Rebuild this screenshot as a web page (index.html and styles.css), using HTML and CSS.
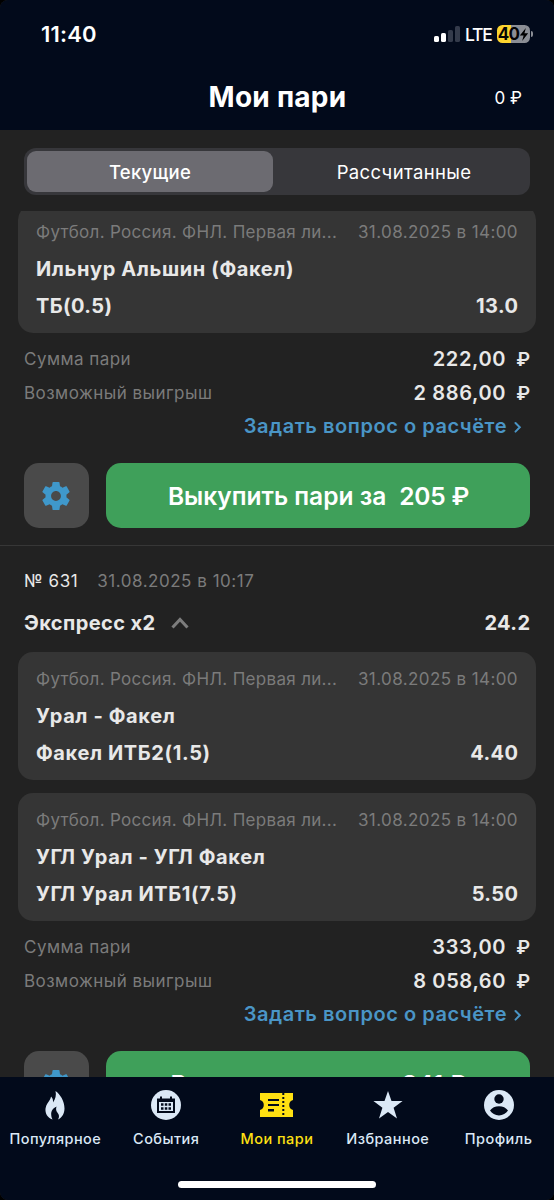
FILE: index.html
```html
<!DOCTYPE html>
<html lang="ru">
<head>
<meta charset="utf-8">
<title>Мои пари</title>
<link rel="stylesheet" href="styles.css">
</head>
<body>
<svg class="defs" width="0" height="0" aria-hidden="true">
  <symbol id="gear" viewBox="2 2 20 20"><path d="M19.43 12.98c.04-.32.07-.64.07-.98s-.03-.66-.07-.98l2.11-1.65c.19-.15.24-.42.12-.64l-2-3.46c-.12-.22-.39-.3-.61-.22l-2.49 1c-.52-.4-1.08-.73-1.69-.98l-.38-2.65C14.46 2.18 14.25 2 14 2h-4c-.25 0-.46.18-.49.42l-.38 2.65c-.61.25-1.17.59-1.69.98l-2.49-1c-.23-.09-.49 0-.61.22l-2 3.46c-.13.22-.07.49.12.64l2.11 1.65c-.04.32-.07.65-.07.98s.03.66.07.98l-2.11 1.65c-.19.15-.24.42-.12.64l2 3.46c.12.22.39.3.61.22l2.49-1c.52.4 1.08.73 1.69.98l.38 2.65c.03.24.24.42.49.42h4c.25 0 .46-.18.49-.42l.38-2.65c.61-.25 1.17-.59 1.69-.98l2.49 1c.23.09.49 0 .61-.22l2-3.46c.12-.22.07-.49-.12-.64l-2.11-1.65zM12 15.5c-1.93 0-3.500-1.57-3.500-3.5s1.57-3.5 3.500-3.5 3.500 1.57 3.500 3.5-1.57 3.5-3.500 3.5z"/></symbol>
</svg>
<div class="app">
  <header class="header">
    <div class="status">
      <span class="time">11:40</span>
      <span class="status-right">
        <svg class="signal" viewBox="0 0 26 16" width="26" height="16"><rect x="0" y="10" width="5" height="6" rx="1.6" fill="#fff"/><rect x="7" y="7" width="5" height="9" rx="1.6" fill="#fff"/><rect x="14" y="4" width="5" height="12" rx="1.6" fill="#343b4b"/><rect x="21" y="0" width="5" height="16" rx="1.6" fill="#343b4b"/></svg>
        <span class="lte">LTE</span>
        <span class="battery"><span class="battery-text">40</span><svg class="bolt" viewBox="0 0 10 14" width="10" height="13"><path d="M7 0 .5 8H4.600L3 14 9.500 5.700H5.500z"/></svg></span>
        <span class="battery-tip"></span>
      </span>
    </div>
    <div class="titlebar">
      <h1 class="title">Мои пари</h1>
      <span class="balance">0 ₽</span>
    </div>
  </header>

  <div class="tabs">
    <span class="tab tab-active">Текущие</span>
    <span class="tab">Рассчитанные</span>
  </div>

  <main class="list">
    <section class="bet">
      <div class="card">
        <div class="row meta"><span class="league">Футбол. Россия. ФНЛ. Первая ли...</span><span class="when">31.08.2025 в 14:00</span></div>
        <div class="row strong"><span>Ильнур Альшин (Факел)</span></div>
        <div class="row strong"><span class="tight">ТБ(0.5)</span><span class="odds">13.0</span></div>
      </div>
      <div class="totals">
        <div class="row"><span class="label">Сумма пари</span><span class="amount">222,00<i>₽</i></span></div>
        <div class="row"><span class="label">Возможный выигрыш</span><span class="amount">2 886,00<i>₽</i></span></div>
        <div class="row ask"><span>Задать вопрос о расчёте</span><svg viewBox="0 0 8 12" width="8" height="12"><path d="m1.500 2 4.300 4.300-4.300 4.300"/></svg></div>
      </div>
      <div class="actions">
        <span class="settings"><svg class="gear" width="28" height="28"><use href="#gear"/></svg></span>
        <span class="cashout"><span>Выкупить пари за</span><span class="sum">205 ₽</span></span>
      </div>
    </section>

    <section class="bet bet-next">
      <div class="row number"><span class="id">№ 631</span><span class="placed">31.08.2025 в 10:17</span></div>
      <div class="row strong express"><span class="tight">Экспресс x2</span><svg viewBox="0 0 18 12" width="18" height="12"><path d="m1.500 10.500 7.500-8 7.500 8"/></svg><span class="odds total">24.2</span></div>
      <div class="card">
        <div class="row meta"><span class="league">Футбол. Россия. ФНЛ. Первая ли...</span><span class="when">31.08.2025 в 14:00</span></div>
        <div class="row strong"><span>Урал - Факел</span></div>
        <div class="row strong"><span>Факел ИТБ2(1.5)</span><span class="odds">4.40</span></div>
      </div>
      <div class="card">
        <div class="row meta"><span class="league">Футбол. Россия. ФНЛ. Первая ли...</span><span class="when">31.08.2025 в 14:00</span></div>
        <div class="row strong"><span>УГЛ Урал - УГЛ Факел</span></div>
        <div class="row strong"><span>УГЛ Урал ИТБ1(7.5)</span><span class="odds">5.50</span></div>
      </div>
      <div class="totals">
        <div class="row"><span class="label">Сумма пари</span><span class="amount">333,00<i>₽</i></span></div>
        <div class="row"><span class="label">Возможный выигрыш</span><span class="amount">8 058,60<i>₽</i></span></div>
        <div class="row ask"><span>Задать вопрос о расчёте</span><svg viewBox="0 0 8 12" width="8" height="12"><path d="m1.500 2 4.300 4.300-4.300 4.300"/></svg></div>
      </div>
      <div class="actions">
        <span class="settings"><svg class="gear" width="28" height="28"><use href="#gear"/></svg></span>
        <span class="cashout"><span>Выкупить пари за</span><span class="sum">841 ₽</span></span>
      </div>
    </section>
  </main>

  <nav class="nav">
    <div class="items">
      <a class="item"><svg viewBox="0 0 20 30" width="20" height="30"><path d="M7.500 29.500C2.500 27.500 0 23.500.5 18.500 1 14.500 3.500 12 5 9.500c.6-1 .8-2 1-3 1.600 1.400 2.300 3.500 2 6C10.500 9 11.500 5 10.500 1c4.500 3 9 10 9 17.500 0 5-2.500 9-6.500 11 1.500-2.500 1.300-4.800-.3-6.500-1.700-1.800-2-4-1.200-6.500-3.500 1.500-5.500 4.500-5.300 8 .1 2 .5 3.500 1.300 5z"/></svg><span>Популярное</span></a>
      <a class="item"><svg viewBox="0 0 30 30" width="30" height="30"><circle cx="15" cy="15" r="15"/><path class="cut" d="M6 8.500h3V6.500h2v2h8v-2h2v2h3V23H6z"/><path d="M8 12h14v9H8z"/><path class="cut" d="M10 13.200h2.500v2.500H10zm3.800 0h2.500v2.500h-2.500zm3.700 0H20v2.500h-2.500zM10 17.300h2.500v2.500H10zm3.800 0h2.500v2.500h-2.500zm3.700 0H20v2.500h-2.500z"/></svg><span>События</span></a>
      <a class="item current"><svg viewBox="0 0 33 24" width="33" height="24"><path d="M0 0h33v7a5.200 5.200 0 0 0 0 10v7H0v-7a5.200 5.200 0 0 0 0-10z"/><path class="cut" d="M8 6h11v2H8zm0 5h11v2H8zm0 5h6v2.500H8z"/><path class="perf" d="M23.300 0v24"/></svg><span>Мои пари</span></a>
      <a class="item"><svg viewBox="0 0 30 30" width="30" height="30"><path d="m15 1 3.500 10H29.600l-9 6.700L24 28.500l-9-6.500-9 6.500 3.400-10.800L.4 11h11.100z"/></svg><span>Избранное</span></a>
      <a class="item"><svg viewBox="0 0 30 30" width="30" height="30"><circle cx="15" cy="15" r="15"/><circle class="cut" cx="15" cy="9" r="4.700"/><path class="cut" d="M6 20.600c2-2.800 5.200-4.300 9-4.300s7 1.500 9 4.300c-2 3.100-5.200 4.900-9 4.900s-7-1.800-9-4.900z"/></svg><span>Профиль</span></a>
    </div>
    <div class="home"></div>
  </nav>
</div>
</body>
</html>
```

FILE: styles.css
```css
* { box-sizing: border-box; }
body { margin: 0; background: #000; font-family: Inter, "Noto Sans", sans-serif; }
.defs { display: block; }
.app { width: 554px; height: 1200px; display: flex; flex-direction: column; background: #222; border-radius: 8px; overflow: hidden; color: #e8e8e8; white-space: nowrap; }

.header { flex: none; height: 130px; background: #020a1b; color: #fff; }
.status { height: 68px; padding: 0 21px 0 41px; display: flex; align-items: center; justify-content: space-between; }
.time { font-size: 22px; font-weight: 600; letter-spacing: 0.2px; }
.status-right { display: flex; align-items: center; }
.lte { margin-left: 5px; width: 32px; font-size: 17.5px; font-weight: 500; letter-spacing: -1.2px; }
.battery { width: 33px; height: 18px; border-radius: 5.500px; background: linear-gradient(90deg, #fdd52e 14px, #8b8e95 14px); color: #050505; display: flex; align-items: center; justify-content: center; }
.battery-text { font-size: 17px; font-weight: 700; letter-spacing: -0.7px; }
.battery-tip { width: 2px; height: 6px; margin-left: 1px; border-radius: 0 2px 2px 0; background: #8b8e95; }
.titlebar { height: 58px; display: grid; grid-template-columns: 1fr auto 1fr; align-items: center; }
.title { grid-column: 2; margin: 0; padding-left: 1px; font-size: 28px; font-weight: 700; letter-spacing: 0.25px; }
.balance { justify-self: end; margin-right: 32px; padding-top: 1px; font-size: 17px; }

.tabs { flex: none; height: 47px; margin: 18px 24px 16px; padding: 3px; border-radius: 12px; background: #37373b; display: flex; color: #fff; }
.tab { flex: 1 1 0; display: flex; align-items: center; justify-content: center; padding-left: 8px; border-radius: 9px; font-size: 18.5px; letter-spacing: 0.35px; }
.tab-active { flex: 0 0 246px; padding-left: 0; background: #6c6b71; font-weight: 500; letter-spacing: 0.25px; }

.list { flex: none; height: 866px; overflow: hidden; }
.bet { padding-bottom: 17px; }
.list > .bet:first-child { margin-top: -6.500px; }
.row { display: flex; align-items: center; justify-content: space-between; }
.card { height: 128px; margin: 0 18px 12.500px; padding: 8.500px 18px 8px; border-radius: 15px; background: #353535; }
.card .row { height: 37px; }
.meta { font-size: 17px; color: #7b7b7b; letter-spacing: 0.31px; }
.when { letter-spacing: 0.4px; }
.strong { font-size: 20px; font-weight: 700; letter-spacing: 0.62px; }
.strong .tight, .strong .odds { letter-spacing: 0.4px; }
.strong .odds { margin-right: -0.4px; }
.totals { margin: -2.500px 24px 0; }
.totals .row { height: 33.500px; }
.label { font-size: 17px; letter-spacing: 0.46px; color: #7b7b7b; }
.amount { display: flex; align-items: baseline; font-size: 20px; font-weight: 600; letter-spacing: 0.65px; }
.amount i { font-style: normal; font-size: 19px; margin-left: 10px; letter-spacing: 0; }
.totals .ask { justify-content: flex-end; gap: 7px; padding-right: 8px; font-size: 20px; font-weight: 600; letter-spacing: 0.54px; color: #4a95c6; }
.ask svg { margin-top: 2px; }
.ask path { fill: none; stroke: currentColor; stroke-width: 2; stroke-linecap: round; }
.actions { margin: 20px 24px 0; display: flex; gap: 17px; height: 65px; }
.settings { flex: none; width: 65px; padding-right: 1px; border-radius: 15px; background: #4a4a4a; display: flex; align-items: center; justify-content: center; }
.gear { fill: #3f98cb; }
.cashout { flex: 1; padding-left: 1px; border-radius: 15px; background: #3fa05a; color: #fff; display: flex; align-items: center; justify-content: center; gap: 13px; font-size: 24.5px; font-weight: 600; }
.sum { letter-spacing: -0.2px; }
.bet-next { border-top: 1px solid #373737; padding-top: 16px; }
.number { height: 38px; margin: 0 24px; justify-content: flex-start; gap: 19px; font-size: 17px; letter-spacing: 0.6px; }
.placed { color: #7b7b7b; letter-spacing: 0.52px; }
.express { height: 45px; margin: 0 24px 7px; justify-content: flex-start; gap: 16px; }
.express path { fill: none; stroke: #7d7d7d; stroke-width: 3; }
.total { margin-left: auto; }

.nav { flex: none; height: 123px; padding-top: 13px; background: #020a1b; color: #dbe8f6; }
.items { height: 90px; display: grid; grid-template-columns: repeat(5, 1fr); }
.item { display: flex; flex-direction: column; align-items: center; font-size: 14.5px; font-weight: 500; letter-spacing: 0.45px; }
.item svg { height: 30px; fill: currentColor; }
.item span { margin-top: 9px; line-height: 20px; }
.item .cut { fill: #020a1b; }
.item .perf { stroke: #020a1b; stroke-width: 2; stroke-dasharray: 2 2; }
.current { color: #ffe012; }
.home { width: 198px; height: 7px; margin: 1px auto 0; border-radius: 4px; background: #fff; }
```
